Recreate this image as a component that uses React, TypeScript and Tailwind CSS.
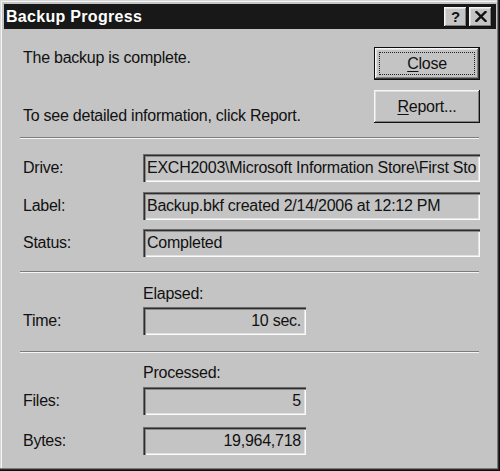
import React from "react";

const font = { fontFamily: '"Liberation Sans", Arial, sans-serif' };

function Field({ text, right, w }: { text: string; right?: boolean; w?: string }) {
  return (
    <div
      className={`h-[28px] ${w ?? "flex-1"} flex items-center overflow-hidden whitespace-nowrap bg-[#c4c4c4] shadow-[inset_1px_1px_#6a6a6a,inset_2px_2px_#2e2e2e,inset_3px_3px_#8a8a8a,inset_-1px_-1px_#fbfbfb,inset_-2px_-2px_#e2e2e2] ${right ? "justify-end pr-[5px]" : "pl-[4px]"}`}
    >
      <span className="text-[16px] tracking-[-0.25px] leading-[18px] text-[#111]">{text}</span>
    </div>
  );
}

function Sep() {
  return <div className="h-[2px] mr-[1px] border-t border-[#7c7c7c] border-b border-b-[#f6f6f6]" />;
}

function Row({ label, children, mt }: { label: string; children: React.ReactNode; mt: string }) {
  return (
    <div className={`flex items-center ${mt}`}>
      <div className="w-[123px] pl-[3px] text-[16px] tracking-[-0.25px] leading-[18px] text-[#111]">{label}</div>
      {children}
    </div>
  );
}

export default function App() {
  return (
    <div
      style={font}
      className="w-[500px] h-[471px] bg-[#c4c4c4] p-[4px] flex flex-col shadow-[inset_-1px_-1px_#0e0e0e,inset_-2px_-2px_#2a2a2a,inset_-3px_-3px_#7a7a7a,inset_1px_1px_#d8d8d8,inset_2px_2px_#f4f4f4]"
    >
      {/* Title bar */}
      <div className="h-[25px] bg-[#181818] flex items-center justify-between pl-[2px] pr-[4px]">
        <span className="text-white font-bold text-[16px] tracking-[0.3px] leading-[18px]">Backup Progress</span>
        <div className="flex gap-[2px]">
          <div className="w-[23px] h-[20px] bg-[#c4c4c4] flex items-center justify-center shadow-[inset_-1px_-1px_#111,inset_1px_1px_#f4f4f4,inset_-2px_-2px_#808080,inset_2px_2px_#dedede]">
            <span className="font-bold text-[15px] leading-[15px] text-[#111] mt-[-1px]">?</span>
          </div>
          <div className="w-[23px] h-[20px] bg-[#c4c4c4] flex items-center justify-center shadow-[inset_-1px_-1px_#111,inset_1px_1px_#f4f4f4,inset_-2px_-2px_#808080,inset_2px_2px_#dedede]">
            <svg width="12" height="11" viewBox="0 0 12 11">
              <path d="M1.5 1 L10.5 10 M10.5 1 L1.5 10" stroke="#111" strokeWidth="2.4" strokeLinecap="square" />
            </svg>
          </div>
        </div>
      </div>

      {/* Body */}
      <div className="flex-1 flex flex-col pl-[16px] pr-[16px]">
        {/* Top section */}
        <div className="h-[108px] flex justify-between">
          <div className="pl-[3px] flex flex-col text-[16px] tracking-[-0.25px] leading-[18px] text-[#111]">
            <div className="mt-[20px]">The backup is complete.</div>
            <div className="mt-[40px]">To see detailed information, click Report.</div>
          </div>
          <div className="flex flex-col mt-[18px]">
            <div className="w-[106px] h-[33px] border border-[#0e0e0e] bg-[#c4c4c4] flex p-[4px] shadow-[inset_-1px_-1px_#3a3a3a,inset_1px_1px_#f6f6f6,inset_-2px_-2px_#808080,inset_2px_2px_#dedede]">
              <div className="flex-1 border border-dotted border-[#222] flex items-center justify-center text-[16px] tracking-[-0.25px] leading-[18px] text-[#111]">
                <span><span className="underline underline-offset-2">C</span>lose</span>
              </div>
            </div>
            <div className="mt-[10px] w-[106px] h-[33px] bg-[#c4c4c4] flex items-center justify-center shadow-[inset_-1px_-1px_#111,inset_1px_1px_#f6f6f6,inset_-2px_-2px_#808080,inset_2px_2px_#dedede] text-[16px] tracking-[-0.25px] leading-[18px] text-[#111]">
              <span><span className="underline underline-offset-2">R</span>eport...</span>
            </div>
          </div>
        </div>

        <Sep />

        <Row label="Drive:" mt="mt-[15px]">
          <Field text="EXCH2003\Microsoft Information Store\First Sto" />
        </Row>
        <Row label="Label:" mt="mt-[10px]">
          <Field text="Backup.bkf created 2/14/2006 at 12:12 PM" />
        </Row>
        <Row label="Status:" mt="mt-[9px]">
          <Field text="Completed" />
        </Row>

        <div className="mt-[14px]">
          <Sep />
        </div>

        <div className="mt-[12px] pl-[123px] text-[16px] tracking-[-0.25px] leading-[18px] text-[#111]">Elapsed:</div>
        <Row label="Time:" mt="mt-[4px]">
          <Field text="10 sec." right w="w-[163px]" />
        </Row>

        <div className="mt-[16px]">
          <Sep />
        </div>

        <div className="mt-[11px] pl-[123px] text-[16px] tracking-[-0.25px] leading-[18px] text-[#111]">Processed:</div>
        <Row label="Files:" mt="mt-[5px]">
          <Field text="5" right w="w-[163px]" />
        </Row>
        <Row label="Bytes:" mt="mt-[12px]">
          <Field text="19,964,718" right w="w-[163px]" />
        </Row>
      </div>
    </div>
  );
}
